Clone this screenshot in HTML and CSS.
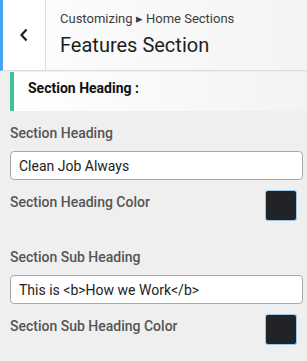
FILE: index.html
```html
<!DOCTYPE html>
<html lang="en">
<head>
  <meta charset="UTF-8" />
  <title>Features Section</title>
  <link rel="stylesheet" href="styles.css">
</head>
<body>
  <div class="top-bar">
    <a href="#" class="back-btn" aria-label="Back">
      <svg width="10" height="14" viewBox="0 0 10 14"><path d="M7.5 1.5 L2.5 7 L7.5 12.5" fill="none" stroke="#1e1e1e" stroke-width="2.2"/></svg>
    </a>
    <div class="titles">
      <span class="crumb">Customizing &#9656; Home Sections</span>
      <span class="title">Features Section</span>
    </div>
  </div>

  <div class="panel">
    <div class="section-head">Section Heading :</div>

    <div class="field">
      <label class="label">Section Heading</label>
      <input type="text" value="Clean Job Always" />
    </div>
    <div class="color-row">
      <span class="label">Section Heading Color</span>
      <span class="swatch"></span>
    </div>

    <div class="field field-gap">
      <label class="label">Section Sub Heading</label>
      <input type="text" value="This is <b>How we Work</b>" />
    </div>
    <div class="color-row">
      <span class="label">Section Sub Heading Color</span>
      <span class="swatch"></span>
    </div>
  </div>
</body>
</html>
```

FILE: styles.css
```css
body {
  font-family: Roboto, "Noto Sans", sans-serif;
  background-color: #efefef;
  color: #1e1e1e;
  margin: 0;
}

.top-bar {
  display: flex;
  height: 70px;
  background: linear-gradient(to right, #fdfdfd, #f4f4f4);
  border-bottom: 1px solid #dcdcdc;
  border-left: 3px solid #45a2f2;
}

.back-btn {
  width: 42px;
  display: flex;
  align-items: center;
  justify-content: center;
  border-right: 1px solid #dcdcdc;
  background-color: #fff;
}

.titles {
  display: flex;
  flex-direction: column;
  padding: 10px 0 0 14px;
}

.crumb {
  font-size: 13px;
  color: #3c3c3c;
  line-height: 18px;
}

.title {
  font-size: 20px;
  color: #1e1e1e;
  line-height: 28px;
  margin-top: 3px;
}

.panel {
  padding: 1px 4px 0 10px;
}

.section-head {
  margin-right: -4px;
  height: 39px;
  line-height: 33px;
  padding-left: 14px;
  border-left: 4px solid #3fbf9c;
  background: linear-gradient(to right, #ffffff, #f3f3f3);
  font-size: 14px;
  font-weight: bold;
  color: #111;
}

.label {
  font-size: 14px;
  color: #555;
  font-weight: 500;
}

.field {
  display: flex;
  flex-direction: column;
  padding-top: 12px;
}

.field .label {
  line-height: 20px;
  margin-bottom: 8px;
}

.field-gap {
  padding-top: 26px;
}

input[type="text"] {
  height: 29px;
  box-sizing: border-box;
  padding: 0 8px;
  border: 1px solid #a9a9a9;
  border-radius: 4px;
  background-color: #fff;
  font-family: inherit;
  font-size: 14px;
  color: #222;
}

.color-row {
  display: flex;
  justify-content: space-between;
  align-items: flex-start;
  padding: 10px 6px 0 0;
}

.color-row .label {
  line-height: 20px;
  margin-top: 2px;
}

.swatch {
  width: 32px;
  height: 31px;
  box-sizing: border-box;
  border-radius: 3px;
  background-color: #222326;
  border: 1px solid #9cc8e8;
}
```
